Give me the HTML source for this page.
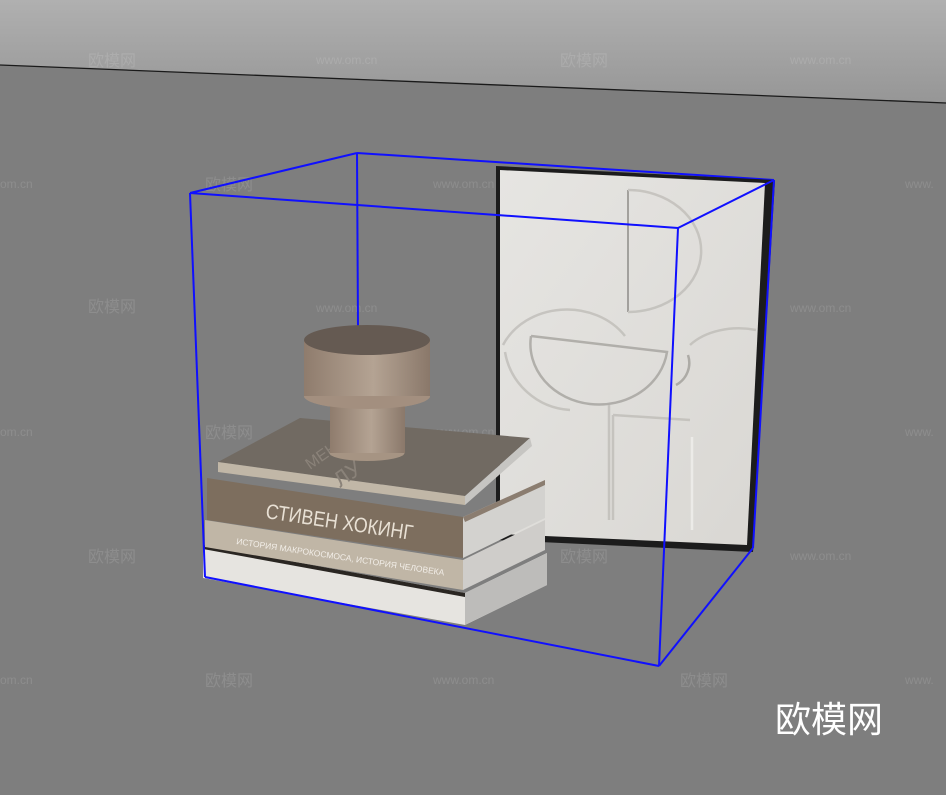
<!DOCTYPE html>
<html><head><meta charset="utf-8"><style>
html,body{margin:0;padding:0;width:946px;height:795px;overflow:hidden;background:#7d7d7d}
svg{display:block}
.wm{font-family:"Liberation Sans","Noto Sans CJK SC",sans-serif;fill:#ffffff;fill-opacity:.12}
</style></head><body>
<svg width="946" height="795" viewBox="0 0 946 795" xmlns="http://www.w3.org/2000/svg">
<defs>
<linearGradient id="sky" x1="0" y1="0" x2="0" y2="1">
<stop offset="0" stop-color="#b0b0b0"/><stop offset="1" stop-color="#969696"/>
</linearGradient>
<linearGradient id="cyl" x1="0" y1="0" x2="1" y2="0">
<stop offset="0" stop-color="#8f7c6d"/><stop offset=".55" stop-color="#b4a393"/><stop offset="1" stop-color="#8a786a"/>
</linearGradient>
<linearGradient id="panel" x1="0" y1="0" x2="1" y2="1">
<stop offset="0" stop-color="#e6e5e2"/><stop offset="1" stop-color="#d9d7d3"/>
</linearGradient>
</defs>
<rect width="946" height="795" fill="#7e7e7e"/>
<polygon points="0,0 946,0 946,103 0,65" fill="url(#sky)"/>
<line x1="0" y1="65" x2="946" y2="103" stroke="#1a1a1a" stroke-width="1.3"/>

<g class="wm" font-size="16">
<text x="88" y="66">欧模网</text><text x="560" y="66">欧模网</text>
<text x="205" y="190">欧模网</text><text x="680" y="190">欧模网</text>
<text x="88" y="312">欧模网</text><text x="560" y="312">欧模网</text>
<text x="205" y="438">欧模网</text><text x="680" y="438">欧模网</text>
<text x="88" y="562">欧模网</text><text x="560" y="562">欧模网</text>
<text x="205" y="686">欧模网</text><text x="680" y="686">欧模网</text>
</g>
<g class="wm" font-size="12">
<text x="316" y="64">www.om.cn</text><text x="790" y="64">www.om.cn</text>
<text x="0" y="188">om.cn</text><text x="433" y="188">www.om.cn</text><text x="905" y="188">www.</text>
<text x="316" y="312">www.om.cn</text><text x="790" y="312">www.om.cn</text>
<text x="0" y="436">om.cn</text><text x="433" y="436">www.om.cn</text><text x="905" y="436">www.</text>
<text x="316" y="560">www.om.cn</text><text x="790" y="560">www.om.cn</text>
<text x="0" y="684">om.cn</text><text x="433" y="684">www.om.cn</text><text x="905" y="684">www.</text>
</g>

<g stroke="#1010ff" stroke-width="2" fill="none">
<line x1="190" y1="193" x2="357" y2="153"/>
<line x1="357" y1="153" x2="774" y2="180"/>
<line x1="357" y1="153" x2="358" y2="330"/>
</g>

<polygon points="496,166 775,180 753,552 496,540" fill="#1c1c1c"/>
<polygon points="500,170 765,183 747,545 500,534" fill="url(#panel)"/>
<g fill="none" stroke="#bdbbb6" stroke-width="2.5" opacity=".75">
<line x1="628" y1="190" x2="628" y2="312" stroke="#8e8c88" stroke-width="2"/>
<path d="M628 190 A 72 60 0 0 1 628 312"/>
<path d="M503 345 A 70 60 0 0 1 625 336"/>
<path d="M531 336 L 667 352 A 68 60 0 0 1 531 336" stroke="#a19f9a"/>
<path d="M505 352 A 70 70 0 0 0 570 410"/>
<line x1="609" y1="405" x2="609" y2="520"/>
<path d="M613 415 L 613 520 M 613 415 L 690 420"/>
<path d="M688 355 A 25 25 0 0 1 676 385" stroke="#9d9b96"/>
<path d="M690 345 A 60 40 0 0 1 756 330"/>
<line x1="692" y1="437" x2="692" y2="530" stroke="#f2f1ee"/>
</g>

<!-- stool -->
<ellipse cx="367" cy="396" rx="63" ry="13" fill="#a38f7f"/>
<rect x="304" y="340" width="126" height="56" fill="url(#cyl)"/>
<ellipse cx="367" cy="340" rx="63" ry="15" fill="#655a52"/>

<!-- bottom book -->
<polygon points="203,545 465,593 547,553 547,585 465,625 203,578" fill="#e6e4e0"/>
<polygon points="465,593 547,553 547,585 465,625" fill="#bdbcba"/>
<polygon points="203,545 465,593 465,597 203,549" fill="#2a2622"/>
<!-- third book -->
<polygon points="205,520 463,560 463,590 205,547" fill="#c0b6a6"/>
<polygon points="463,560 545,520 545,550 463,590" fill="#cfcdca"/>
<text x="0" y="0" transform="translate(236,544) rotate(8.6)" font-family="Liberation Sans,sans-serif" font-size="8.5" fill="#f2eee8">ИСТОРИЯ МАКРОКОСМОСА, ИСТОРИЯ ЧЕЛОВЕКА</text>
<!-- second book -->
<polygon points="207,478 463,517 463,558 207,520" fill="#7d6e5e"/>
<polygon points="463,517 545,480 545,518 463,558" fill="#d3d2cf"/>
<polygon points="463,517 545,480 545,485 465,522" fill="#8b7d70"/>
<text x="0" y="0" transform="translate(265,518) rotate(8.5) scale(0.85,1)" font-family="Liberation Sans,sans-serif" font-size="21" fill="#e8e0d4">СТИВЕН ХОКИНГ</text>
<!-- top book -->
<polygon points="218,462 300,418 530,438 465,496" fill="#716a62"/>
<polygon points="218,462 465,496 465,505 218,472" fill="#c1b7a7"/>
<polygon points="465,496 530,438 532,446 465,505" fill="#c6c5c2"/>
<text x="0" y="0" transform="translate(310,470) rotate(-35)" font-family="Liberation Sans,sans-serif" font-size="16" fill="#8a8279">МЕНЬ</text>
<text x="0" y="0" transform="translate(340,488) rotate(-35)" font-family="Liberation Sans,sans-serif" font-size="22" fill="#8a8279">ЛУ</text>
<!-- stem -->
<ellipse cx="367" cy="453" rx="37.5" ry="8" fill="#a69483"/>
<rect x="330" y="405" width="75" height="48" fill="url(#cyl)"/>
<ellipse cx="367" cy="396" rx="63" ry="13" fill="#a38f7f" clip-path="inset(0 0 0 0)"/>
<rect x="304" y="380" width="126" height="16" fill="url(#cyl)"/>

<g stroke="#1010ff" stroke-width="2" fill="none">
<line x1="190" y1="193" x2="678" y2="228"/>
<line x1="678" y1="228" x2="774" y2="180"/>
<line x1="190" y1="193" x2="205" y2="577"/>
<line x1="678" y1="228" x2="659" y2="666"/>
<line x1="774" y1="180" x2="753" y2="548"/>
<line x1="205" y1="577" x2="659" y2="666"/>
<line x1="659" y1="666" x2="753" y2="548"/>
</g>

<text x="775" y="732" font-family="Liberation Sans,'Noto Sans CJK SC',sans-serif" font-size="36" fill="#ffffff">欧模网</text>
</svg>
</body></html>
